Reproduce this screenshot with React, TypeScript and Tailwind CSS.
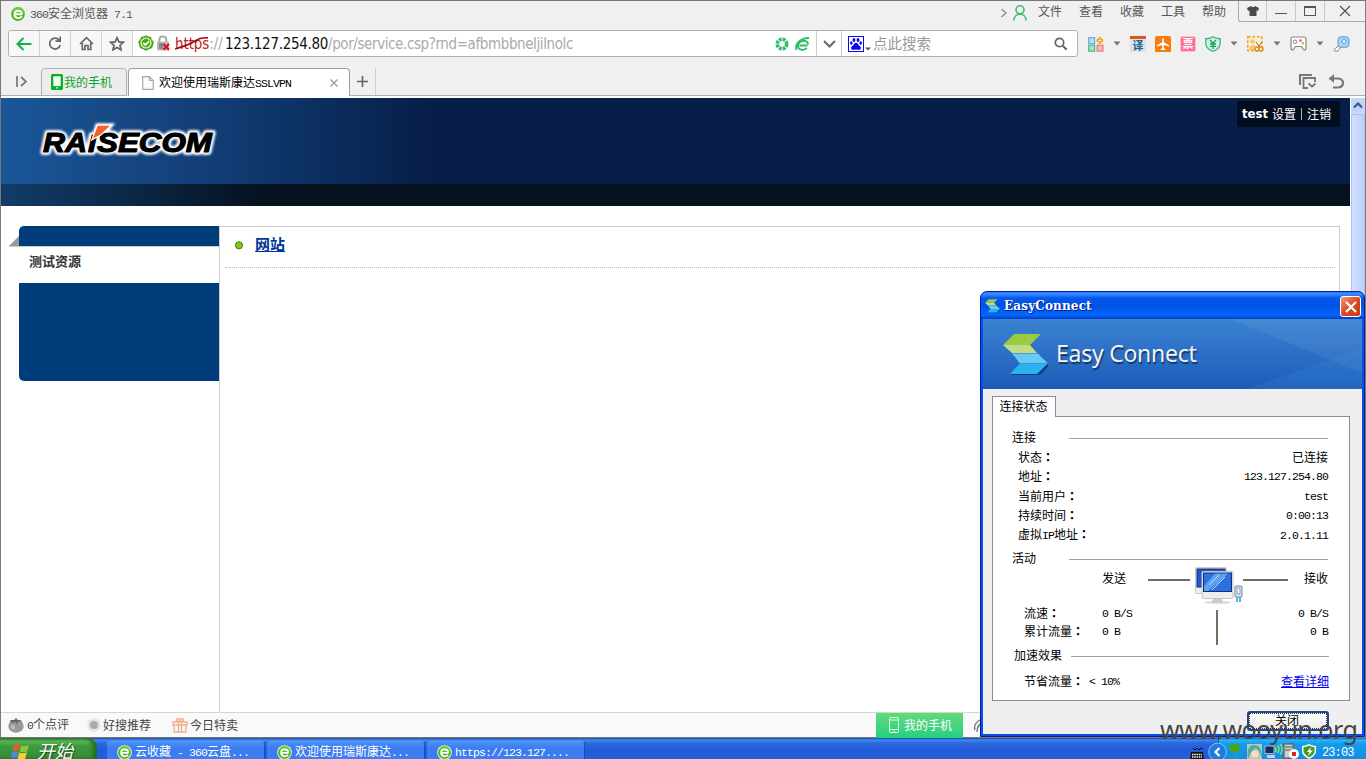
import React from "react";

function Sim({ t, className = "" }: { t: string; className?: string }) {
  return (
    <span className={"whitespace-pre " + className}>
      {t.split(/([\x20-\x7e]+|：)/).map((p, i) =>
        p === "：" ? (
          <span key={i} className="font-['Noto_Sans_CJK_JP',sans-serif] font-bold">{p}</span>
        ) : i % 2 ? (
          <span key={i} className="font-['Liberation_Mono',monospace] text-[11.5px] tracking-[-0.9px]">
            {p}
          </span>
        ) : (
          <span key={i}>{p}</span>
        )
      )}
    </span>
  );
}

function EIcon({ size = 16 }: { size?: number }) {
  return (
    <svg width={size} height={size} viewBox="0 0 16 16" className="shrink-0">
      <circle cx="8" cy="8" r="7.8" fill="#f4faf0" />
      <circle cx="8" cy="8" r="6.9" fill="#4cb81f" />
      <path d="M2 5Q5 0 11 1.6Q14 3 15 6L8 7Z" fill="#8be04c" opacity=".5" />
      <path d="M12.2 8.3H5.2M12 8.2C12 3.6 4.5 3.6 4.4 8.3C4.4 12.8 10.2 13 11.8 10.3" fill="none" stroke="#fff" strokeWidth="1.9" />
    </svg>
  );
}

function Caret() {
  return (
    <svg width="8" height="5" viewBox="0 0 8 5" className="shrink-0">
      <path d="M0.5 0.5H7.5L4 4.5Z" fill="#777" />
    </svg>
  );
}

function TitleBar() {
  const menus = ["文件", "查看", "收藏", "工具", "帮助"];
  return (
    <div className="flex h-[29px] shrink-0 items-start border-t border-[#787679]">
      <div className="flex items-start gap-[4px] pt-[5px] pl-[9px] text-[12px] leading-[16px] text-[#555]">
        <EIcon />
        <Sim t="360安全浏览器 7.1" className="-mt-px" />
      </div>
      <div className="flex-1" />
      <svg width="28" height="16" viewBox="0 0 28 16" className="mt-[4px] mr-[10px]" fill="none">
        <path d="M1.5 4L6 8L1.5 12" stroke="#888" strokeWidth="1.3" />
        <circle cx="20" cy="4.8" r="4" stroke="#3dbb6a" strokeWidth="1.6" />
        <path d="M14 15.5C14 7.2 26 7.2 26 15.5" stroke="#3dbb6a" strokeWidth="1.6" />
      </svg>
      <div className="flex w-[200px] gap-[17px] pt-[1px] text-[12px] leading-[18px] text-[#555]">
        {menus.map((m) => (
          <span key={m} className="w-[24px] shrink-0">{m}</span>
        ))}
      </div>
      <div className="flex h-[21px] w-[127px] rounded-bl-[3px] border-b border-l border-[#aaa]">
        <div className="flex w-[28px] items-center justify-center border-r border-[#c8c8c8]">
          <svg width="12" height="10" viewBox="0 0 12 10"><path d="M0 2L4 0L5 1H7L8 0L12 2L11 5L9.5 4.5V10H2.5V4.5L1 5Z" fill="#4b4b4b" /></svg>
        </div>
        <div className="flex w-[29px] items-center justify-center border-r border-[#c8c8c8]">
          <div className="mt-[5px] h-px w-[12px] bg-[#555]" />
        </div>
        <div className="flex w-[29px] items-center justify-center border-r border-[#c8c8c8]">
          <div className="h-[10px] w-[12px] border border-t-2 border-[#555]" />
        </div>
        <div className="flex flex-1 items-center justify-center">
          <svg width="12" height="12" viewBox="0 0 12 12"><path d="M1 1L11 11M11 1L1 11" stroke="#555" strokeWidth="1.3" /></svg>
        </div>
      </div>
    </div>
  );
}

function NavCell({ children }: { children: React.ReactNode }) {
  return <div className="flex h-full w-[31px] shrink-0 items-center justify-center border-r border-[#d2d2d2] bg-[#f8f8f8]">{children}</div>;
}

function AddressRow() {
  return (
    <div className="flex h-[27px] shrink-0 items-center pl-[7px]">
      <div className="flex h-[27px] w-[1070px] shrink-0 items-center overflow-hidden rounded-[3px] border border-[#b0b0b0] bg-white">
        <NavCell>
          <svg width="16" height="14" viewBox="0 0 16 14" fill="none" stroke="#12b04c" strokeWidth="2"><path d="M15.5 7H2M7.5 1L1.5 7L7.5 13" /></svg>
        </NavCell>
        <NavCell>
          <svg width="14" height="15" viewBox="0 0 14 15" fill="none" stroke="#666" strokeWidth="1.7"><path d="M11.5 4.5A5.4 5.4 0 1 0 12.3 9M12.2 .5V5.2H7.5" /></svg>
        </NavCell>
        <NavCell>
          <svg width="15" height="15" viewBox="0 0 15 15" fill="none" stroke="#666" strokeWidth="1.7"><path d="M1 8L7.5 1.6L14 8M3.3 7V13.5H6V9.5H9V13.5H11.7V7" /></svg>
        </NavCell>
        <NavCell>
          <svg width="16" height="16" viewBox="0 0 16 16" fill="none" stroke="#666" strokeWidth="1.7"><path d="M8 1.7L9.9 5.9L14.4 6.3L11 9.3L12 13.8L8 11.4L4 13.8L5 9.3L1.6 6.3L6.1 5.9Z" /></svg>
        </NavCell>
        <svg width="34" height="17" viewBox="0 0 34 17" className="ml-[5px] shrink-0" fill="none">
          <path d="M8 .3L10.3 1.6L13 2L13.8 4.7L15.8 6.7L15.4 9.3L14 13L11 14.2L8 15.8L5 14.2L2 13L1 9.3L.2 6.7L2 4.7L3 2L5.7 1.6Z" fill="#4aa818" />
          <circle cx="8" cy="8" r="4.9" stroke="#d7f3a9" strokeWidth="1.4" />
          <path d="M5.3 8L7.3 10L11 6.3" stroke="#fff" strokeWidth="1.8" />
          <path d="M21.3 8V4.8C21.3 .3 28.3 .3 28.3 4.8V8" stroke="#aaa" strokeWidth="2" />
          <rect x="19" y="6.5" width="12" height="9" rx="1" fill="#b9b9b9" />
          <rect x="21" y="8" width="4" height="6" fill="#888" />
          <path d="M25.5 9L31 14.8M31 9L25.5 14.8" stroke="#e0101c" strokeWidth="2.2" />
        </svg>
        <div className="flex pt-px font-['DejaVu_Sans_Condensed','DejaVu_Sans',sans-serif] text-[15px] leading-[24px] font-stretch-condensed whitespace-pre">
          <span className="flex w-[53px] pl-[3px] tracking-[-0.1px]">
            <span className="relative text-[#c02020]">
              https
              <svg width="34" height="16" viewBox="0 0 34 16" className="absolute top-[4px] left-0"><path d="M0 13Q14 9 20 5T33 2" stroke="#a00808" strokeWidth="1.6" fill="none" /></svg>
            </span>
            <span className="text-[#aaa]">://</span>
          </span>
          <span className="w-[103px] tracking-[-0.3px] text-[#111]">123.127.254.80</span>
          <span className="tracking-[-0.4px] text-[#aaa]">/por/service.csp?rnd=afbmbbneljilnolc</span>
        </div>
        <div className="flex-1" />
        <svg width="35" height="14" viewBox="0 0 35 14" className="mr-[6px] shrink-0" fill="none">
          <circle cx="7" cy="7" r="4.7" stroke="#2dbf68" strokeWidth="3.6" strokeDasharray="2.8 0.9" />
          <path d="M32.5 8.5H24.5M33 7.5C33 2 23.8 2.7 23 8.5C22.8 13.6 29.5 14 31.8 10.8M21.5 13C19.5 6 27 .8 34 1" stroke="#2dbf68" strokeWidth="1.9" />
        </svg>
        <div className="flex h-full w-[26px] shrink-0 items-center justify-center border-x border-[#ccc]">
          <svg width="13" height="8" viewBox="0 0 13 8"><path d="M1 1L6.5 6.5L12 1" stroke="#666" strokeWidth="2" fill="none" /></svg>
        </div>
        <div className="flex h-full w-[235px] shrink-0 items-center pl-[6px]">
          <svg width="16" height="16" viewBox="0 0 16 16" fill="#0808ee" className="shrink-0">
            <rect x=".5" y=".5" width="15" height="15" fill="#fff" stroke="#0808ee" />
            <ellipse cx="6" cy="4" rx="1.4" ry="1.9" /><ellipse cx="10" cy="4" rx="1.4" ry="1.9" />
            <ellipse cx="3.3" cy="7" rx="1.3" ry="1.7" /><ellipse cx="12.7" cy="7" rx="1.3" ry="1.7" />
            <path d="M8 6.7C10 6.7 10 9 12 10.3C14 12 12.5 14.5 10 13.7Q8 13.2 6 13.7C3.5 14.5 2 12 4 10.3C6 9 6 6.7 8 6.7Z" />
          </svg>
          <svg width="6" height="4" viewBox="0 0 6 4" className="mt-[10px] ml-[1px]"><path d="M0 .5H6L3 3.5Z" fill="#555" /></svg>
          <span className="ml-[2px] pb-px text-[14.5px] leading-[24px] text-[#999]">点此搜索</span>
          <div className="flex-1" />
          <svg width="14" height="14" viewBox="0 0 14 14" className="mr-[9px]" fill="none" stroke="#666"><circle cx="5.5" cy="5.5" r="4.2" strokeWidth="1.7" /><path d="M8.7 8.7L12.7 12.7" strokeWidth="2" /></svg>
        </div>
      </div>
      <div className="flex flex-1 items-center pl-[10px]">
        <svg width="16" height="16" viewBox="0 0 16 16" className="mr-[9px]">
          <rect x=".7" y="1.7" width="6" height="6" fill="#b9defa" stroke="#5a9fd4" /><path d="M11.8 1.2V7.8M8.5 4.5H15.1" stroke="#e7a222" strokeWidth="3" /><path d="M11.8 2.5V6.5M9.8 4.5H13.8" stroke="#ffe070" />
          <rect x=".7" y="9.2" width="6" height="6" fill="#9be8c0" stroke="#3fae78" /><rect x="9" y="9.2" width="6" height="6" fill="#ffb5ae" stroke="#de7770" />
        </svg>
        <Caret />
        <div className="ml-[9px] h-[16px] w-[16px] border-t-[3px] border-[#e4541d] bg-[#e2e2e2] text-center text-[11px] leading-[12px] font-bold text-[#16699d]">译</div>
        <svg width="16" height="16" viewBox="0 0 16 16" className="ml-[9px]"><rect width="16" height="16" rx="1.5" fill="#f77c0a" /><path d="M7.2 3Q8 1 8.8 3V6.2L14 9.2V10.5L8.8 9V12L10.5 13.3V14H5.5V13.3L7.2 12V9L2 10.5V9.2L7.2 6.2Z" fill="#fff" /></svg>
        <div className="ml-[9px] h-[16px] w-[16px] rounded-[2px] border border-[#f8c4d2] bg-[#fb7093] text-center text-[11px] leading-[13px] font-bold text-white">票</div>
        <svg width="16" height="16" viewBox="0 0 16 16" className="ml-[9px]" fill="none"><path d="M8 .8Q11 3 15.2 2.7V8Q14.5 13 8 15.4Q1.5 13 .8 8V2.7Q5 3 8 .8Z" fill="#ccf3df" stroke="#43b584" strokeWidth="1.3" /><path d="M5 3.8L8 7.5L11 3.8M8 7.5V13M5 8H11M5 10.4H11" stroke="#1e9f62" strokeWidth="1.3" /></svg>
        <span className="ml-[9px]"><Caret /></span>
        <svg width="17" height="16" viewBox="0 0 17 16" className="ml-[9px]" fill="none"><rect x=".8" y=".8" width="14" height="14" fill="#fff0d2" stroke="#f0a32d" strokeWidth="1.5" strokeDasharray="3 1.5" /><circle cx="5.5" cy="5.5" r="2.3" fill="#f5c681" /><path d="M2 13Q3 8 8 9V14H2Z" fill="#f5c681" /><path d="M9 6L13.5 12M15 6L10.5 12" stroke="#8b7446" /><circle cx="10" cy="13" r="2" stroke="#e8921a" strokeWidth="1.5" /><circle cx="14" cy="13" r="2" stroke="#e8921a" strokeWidth="1.5" /></svg>
        <span className="ml-[9px]"><Caret /></span>
        <svg width="17" height="15" viewBox="0 0 17 15" className="ml-[9px]" fill="none"><path d="M2.5 1H14.5Q16 1 16 3V12Q16 14 14 14L11.5 10.5H5.5L3 14Q1 14 1 12V3Q1 1 2.5 1Z" fill="#fff" stroke="#888" strokeWidth="1.2" /><circle cx="5" cy="5.8" r="1.8" stroke="#888" /><circle cx="10.5" cy="4.5" r="1.2" fill="#e84f3d" /><circle cx="12.8" cy="7.3" r="1.2" fill="#f2a02a" /></svg>
        <span className="ml-[9px]"><Caret /></span>
        <svg width="17" height="16" viewBox="0 0 17 16" className="ml-[9px]" fill="none"><path d="M6.5 9L1 13.5L2 15.2L5 15L7.8 11" fill="#fff" stroke="#888" /><rect x="5" y=".8" width="11" height="10.5" rx="3" fill="#a5d4f7" stroke="#5b9fd0" /><circle cx="11" cy="5.500" r="2" fill="#e8f6ff" stroke="#5b9fd0" /></svg>
      </div>
    </div>
  );
}

function TabRow() {
  return (
    <div className="flex h-[41px] shrink-0 items-end border-b-2 border-white">
      <div className="flex h-[28px] w-[40px] items-center border-b border-[#b0b0b0] pl-[15px]">
        <svg width="12" height="11" viewBox="0 0 12 11" fill="none" stroke="#777" strokeWidth="1.7"><path d="M1 0V11M5 1L10 5.500L5 10" /></svg>
      </div>
      <div className="flex h-[28px] w-[86px] items-center rounded-t-[4px] border border-[#b0b0b0] bg-[#ededed] pl-[9px]">
        <svg width="12" height="16" viewBox="0 0 12 16"><rect width="12" height="16" rx="1.5" fill="#08ae2c" /><rect x="2.3" y="2.3" width="7.4" height="9.8" fill="#f3fff3" /><rect x="5" y="13.4" width="2.2" height="1" fill="#fff" /></svg>
        <span className="ml-[1px] text-[12px] leading-[16px] text-[#08a52c]">我的手机</span>
      </div>
      <div className="ml-[1px] flex h-[28px] w-[222px] items-center rounded-t-[4px] border border-b-0 border-[#a0a0a0] bg-white pl-[13px]">
        <svg width="12" height="14" viewBox="0 0 12 14"><path d="M.7 .7H7.5L11.3 4.5V13.3H.7ZM7.5 .7V4.5H11.3" fill="#fafafa" stroke="#aaa" strokeWidth="1.2" /></svg>
        <Sim t="欢迎使用瑞斯康达SSLVPN" className="ml-[5px] text-[12px] leading-[16px] text-black" />
        <div className="flex-1" />
        <svg width="8" height="8" viewBox="0 0 8 8" className="mr-[11px]"><path d="M.5 .5L7.5 7.5M7.5 .5L.5 7.5" stroke="#999" strokeWidth="1.2" /></svg>
      </div>
      <div className="flex h-[28px] flex-1 items-center border-b border-[#b0b0b0]">
        <div className="flex h-full w-[26px] items-center justify-center border-r border-[#cfcfcf]">
          <svg width="11" height="11" viewBox="0 0 11 11"><path d="M5.5 0V11M0 5.5H11" stroke="#666" strokeWidth="1.7" /></svg>
        </div>
        <div className="flex-1" />
        <svg width="46" height="16" viewBox="0 0 46 16" className="mr-[20px]" fill="none" stroke="#777">
          <path d="M1 11V1H13" strokeWidth="2" /><path d="M9 14H4.5V4H16V8" strokeWidth="1.8" /><path d="M9.5 9.5L13 12.5L16.5 9.5" strokeWidth="1.8" />
          <path d="M30 4.5H39Q44 5 44 9T39 13.5H34" strokeWidth="2.2" /><path d="M30 4.5L35 0V9Z" fill="#777" stroke="none" />
        </svg>
      </div>
    </div>
  );
}

function LogoWord({ halo }: { halo?: boolean }) {
  return (
    <g
      fontFamily="Liberation Sans"
      fontWeight="bold"
      fontStyle="italic"
      fontSize="28.5"
      fill={halo ? "#fff" : "#000"}
      stroke={halo ? "#fff" : "#000"}
      strokeWidth={halo ? 6 : 1.2}
      strokeLinejoin="round"
    >
      <text x="9" y="36" textLength="44" lengthAdjust="spacingAndGlyphs">RA</text>
      <text x="54" y="36" fontSize="24" textLength="8" lengthAdjust="spacingAndGlyphs">I</text>
      <text x="63" y="36" textLength="115" lengthAdjust="spacingAndGlyphs">SECOM</text>
    </g>
  );
}

function Portal() {
  return (
    <div className="flex w-[1349px] shrink-0 flex-col">
      <div className="flex h-[86px] bg-[linear-gradient(90deg,#1a5799_0px,#174a87_100px,#113b72_230px,#0a2a59_350px,#071e48_430px)]">
        <svg width="190" height="54" viewBox="0 0 190 54" className="mt-[18px] ml-[33px]">
          <defs><filter id="glow" x="-10%" y="-30%" width="120%" height="160%"><feGaussianBlur stdDeviation="1.3" /></filter></defs>
          <g filter="url(#glow)">
            <LogoWord halo />
            <path d="M59 23L63.7 9.700H76L66 22Z" fill="#fff" stroke="#fff" strokeWidth="5" />
          </g>
          <LogoWord />
          <path d="M59 22.500L63.700 9.700H76L66.500 18.500Z" fill="#f4622a" stroke="#fff" strokeWidth="2.500" paintOrder="stroke" />
        </svg>
        <div className="flex-1" />
        <div className="mt-[3px] mr-[10px] flex h-[26px] w-[103px] items-center bg-[#030d20] pb-px pl-[5px] text-[12px] text-white">
          <span className="w-[30px] font-['DejaVu_Sans_Condensed','DejaVu_Sans',sans-serif] text-[13px] font-bold font-stretch-condensed">test</span>
          <span>设置</span>
          <span className="mx-[5px] h-[12px] w-px bg-[#b4b88c]" />
          <span>注销</span>
        </div>
      </div>
      <div className="h-[22px] bg-[linear-gradient(90deg,#123c69_0px,#0c2b4c_110px,#081d34_190px,#06121f_260px)]" />
      <div className="mt-[20px] flex flex-1 pl-[8px]">
        <div className="flex w-[210px] flex-col">
          <div className="flex h-[21px] items-end border-b border-[#ccc]">
            <svg width="10" height="10" viewBox="0 0 10 10"><path d="M10 0V10H0Z" fill="#999" /></svg>
            <div className="h-full flex-1 rounded-tl-[5px] bg-[#003d7b]" />
          </div>
          <div className="h-[36px] pl-[20px] text-[13px] leading-[28px] font-bold text-[#333]">测试资源</div>
          <div className="ml-[10px] h-[98px] rounded-bl-[5px] bg-[#003d7b]" />
        </div>
        <div className="w-[1121px] border border-b-0 border-[#ccc] pr-[4px] pl-[5px]">
          <div className="flex h-[41px] items-center border-b border-dotted border-[#bbb] pb-[4px] pl-[10px]">
            <svg width="8" height="9" viewBox="0 0 8 9"><circle cx="4" cy="4.300" r="3.600" fill="#80c80c" stroke="#4b7c11" /></svg>
            <a className="ml-[12px] pb-[3px] text-[15px] leading-[17px] font-bold text-[#003399] underline">网站</a>
          </div>
        </div>
      </div>
    </div>
  );
}

function ScrollBar() {
  return (
    <div className="ml-[1px] flex w-[14px] flex-col bg-[#c9d8fa]">
      <div className="flex h-[14px] items-center justify-center rounded-[2px] bg-[#c2d3fc]">
        <svg width="10" height="7" viewBox="0 0 10 7"><path d="M1 5.500L5 1.500L9 5.500" stroke="#3d5585" strokeWidth="2.200" fill="none" /></svg>
      </div>
      <div className="mt-[2px] flex-1 border border-[#a9c0f3] bg-[linear-gradient(90deg,#d3dffe,#bccffb)]" />
    </div>
  );
}

function StatusBar() {
  return (
    <div className="flex h-[26px] shrink-0 items-center border-t border-b border-t-[#d6d6d6] border-b-[#777] bg-[#f9f9f9] pl-[7px] text-[12px] text-[#444]">
      <svg width="16" height="16" viewBox="0 0 16 16"><ellipse cx="8" cy="9" rx="7.700" ry="6.800" fill="#999" /><path d="M2 3L7 3L8 0L9 3L14 3L10 5L9 7L7 5L4 6Z" fill="#666" /><ellipse cx="5" cy="10" rx="2" ry="2.500" fill="#bbb" /></svg>
      <Sim t="0个点评" className="ml-[3px] w-[60px]" />
      <svg width="14" height="14" viewBox="0 0 14 14"><circle cx="7" cy="7" r="6.800" fill="#e4e4e4" /><circle cx="7" cy="7" r="4" fill="#aaa" /></svg>
      <span className="ml-[2px] w-[69px]">好搜推荐</span>
      <svg width="16" height="15" viewBox="0 0 16 15" fill="none" stroke="#f2ad8c" strokeWidth="1.3"><path d="M1 4H15V7H1ZM2 7V14H14V7M6.500 4V14M9.500 4V14M8 4Q3 3 5 1T8 4Q13 3 11 1T8 4" /></svg>
      <span className="ml-[2px]">今日特卖</span>
      <div className="flex-1" />
      <div className="mr-[10px] flex h-[25px] w-[87px] items-center bg-[linear-gradient(#62da78,#26cf83)] pl-[13px] text-white">
        <svg width="10" height="16" viewBox="0 0 10 16" fill="none" stroke="#e4ffe9"><rect x=".5" y=".5" width="9" height="15" rx="1" /><path d="M.5 3H9.500M.5 12.500H9.500M4 14H6" /></svg>
        <span className="ml-[5px] leading-[16px]">我的手机</span>
      </div>
      <svg width="16" height="16" viewBox="0 0 16 16" className="mr-[376px]" fill="none" stroke="#777" strokeWidth="1.4"><path d="M2 13Q0 7 7 3M4 15Q4 8 10 5" /></svg>
    </div>
  );
}

function Task({ label }: { label: string }) {
  return (
    <div className="mr-[2px] flex h-[18px] w-[158px] shrink-0 items-center rounded-t-[3px] border-t border-r border-t-[#5a9bfb] border-r-[#1b4cb4] bg-[linear-gradient(#4a8ef8,#3a7bef_40%,#3b7ff2)] pt-[3px] pl-[10px] text-[12px] text-white">
      <EIcon size={15} />
      <Sim t={label} className="ml-[3px]" />
    </div>
  );
}

function TaskBar() {
  return (
    <div className="flex h-[21px] shrink-0 bg-[linear-gradient(#1a48a8_0px,#418bf0_2px,#2a68dd_5px,#2359d6_12px,#245edb)]">
      <div className="flex h-[21px] w-[97px] items-start rounded-tr-[9px] bg-[linear-gradient(#2c7a2c,#5fb85a_3px,#3c993c_8px,#358f35)] pl-[11px] shadow-[inset_-4px_0_4px_#246b24]">
        <svg width="19" height="17" viewBox="0 1 19 17" className="mt-[4px]"><path d="M3 4Q6 2 9 4L7.500 10Q5 8.500 1.500 10Z" fill="#ee5a25" /><path d="M10.300 4.500Q14 6 18 4L16 10.500Q12 12 8.500 10.500Z" fill="#8cc63e" /><path d="M1.200 11Q4 9.500 7.300 11L5.500 17Q3 16 0 17Z" fill="#4c86e8" /><path d="M8.300 11.500Q12 13 16 11.300L14 18Q11 19 6.500 17.500Z" fill="#f9cf35" /></svg>
        <span className="ml-[7px] text-[18px] leading-[24px] text-white italic [text-shadow:1px_1px_1px_#174a17]">开始</span>
      </div>
      <div className="flex flex-1 items-end pl-[10px]">
        <Task label="云收藏 - 360云盘..." />
        <Task label="欢迎使用瑞斯康达..." />
        <Task label="https://123.127...." />
      </div>
      <svg width="14" height="13" viewBox="0 0 14 13" className="mt-[9px] mr-[14px] shrink-0"><path d="M3 1L5 3L7 1L9 3L11 1L13 2" stroke="#111" fill="none" /><path d="M1 5H13L14 13H0Z" fill="#111" /><path d="M2 7.500H12M2 10H12" stroke="#fff" strokeWidth="1.300" strokeDasharray="1.500 .8" /></svg>
      <div className="flex w-[148px] items-start border-l border-[#0c4fa0] bg-[linear-gradient(#0f6fd2_0px,#27b4f6_2px,#169be9_6px,#118ee4)]">
        <svg width="108" height="21" viewBox="0 1 108 21" className="-ml-[11px] shrink-0">
          <circle cx="9.500" cy="15" r="8.800" fill="#1c7ddd" stroke="#9dd4fb" strokeWidth=".8" /><path d="M11.500 11L7.500 15L11.500 19" stroke="#fff" strokeWidth="2.300" fill="none" />
          <path d="M20 11L24 7H33L29.500 11L32.500 15H24Z" fill="#4ca516" /><path d="M24 15H34L30 22H22L26 18Z" fill="#149bd4" />
          <rect x="39" y="7" width="15" height="15" fill="#b8ccb2" /><path d="M40 22Q38 8 46 8T54 21L51 14L48 11L43 15Z" fill="#50aaa5" /><ellipse cx="47" cy="17" rx="3.500" ry="3.500" fill="#f6dfc7" />
          <rect x="57" y="9" width="9" height="7.500" fill="#15295d" stroke="#a3b6d8" /><rect x="59" y="18" width="8" height="3" fill="#c5cede" /><path d="M67 10Q69 13 67 15M69.500 8.500Q72.500 12 69.500 16M72 7Q76.500 12 72 17.500" stroke="#9cec44" strokeWidth="1.300" fill="none" />
          <rect x="76" y="7" width="9" height="14" fill="#cfcfcf" stroke="#555" /><path d="M77 10H84M77 13H84" stroke="#555" /><circle cx="86" cy="17" r="5" fill="#fff" /><rect x="84" y="15" width="4" height="4" fill="#ee2010" />
          <path d="M101 7Q105 9 108 9V15Q107 19 101 22Q95 19 94 15V9Q97 9 101 7Z" fill="#fff" /><path d="M101 8.500Q104 10 106.500 10V15Q105.500 18 101 20.500Q97 18 95.500 15V10Q98 10 101 8.500Z" fill="#449c1a" /><path d="M103 10L99 15H101.500L100 19L105 13.500H102Z" fill="#fff" />
        </svg>
        <span className="mt-[8px] ml-[6px] font-['Liberation_Mono',monospace] text-[12px] leading-[14px] tracking-[-0.9px] text-white">23:03</span>
      </div>
    </div>
  );
}

function Row({ l, r, h }: { l: string; r: string; h: string }) {
  return (
    <div className={"flex items-center justify-between pb-[2px] pl-[6px] " + h}>
      <Sim t={l} />
      <Sim t={r} />
    </div>
  );
}

function Logo({ w, h }: { w: number; h: number }) {
  return (
    <svg width={w} height={h} viewBox="0 0 45 41" className="shrink-0">
      <path d="M9 20L17 29L7 40H36L45 30.500L36 20Z" fill="#0c3c80" transform="translate(1 1)" />
      <path d="M11 0H38L27 11H0Z" fill="#9bca43" /><path d="M0 11H27L34 19H9Z" fill="#c0dc85" /><path d="M9 19.500H35L45 29.500H17Z" fill="#67c9f4" /><path d="M17 29.500H45L34 40H7Z" fill="#2bb3ee" />
    </svg>
  );
}

function Section({ label, gap }: { label: string; gap: string }) {
  return (
    <div className="flex h-[20px] items-center">
      <span className={"shrink-0 pb-[2px] " + gap}>{label}</span>
      <div className="h-px flex-1 bg-[#a5a498]" />
    </div>
  );
}

function Dialog() {
  return (
    <div className="absolute top-[291px] left-[980px] flex h-[446px] w-[385px] flex-col rounded-t-[7px] border border-[#001ea0] bg-[#0a4fe8] text-[12px] leading-[16px] text-black">
      <div className="flex h-[27px] shrink-0 items-center rounded-t-[6px] bg-[linear-gradient(#2b78f5_0px,#3d8cff_2px,#0458ee_6px,#0053e2_14px,#0567ff_23px,#003fc0)] pr-[3px] pl-[4px]">
        <Logo w={15} h={14} />
        <span className="ml-[4px] font-['DejaVu_Serif',serif] text-[12px] font-bold tracking-[0.15px] text-white [text-shadow:1px_1px_0_#0a1883]">EasyConnect</span>
        <div className="flex-1" />
        <div className="mt-[2px] flex h-[21px] w-[21px] items-center justify-center rounded-[3px] border border-white bg-[linear-gradient(135deg,#f19a80,#dc4a25_50%,#c93a12)]">
          <svg width="12" height="12" viewBox="0 0 12 12"><path d="M1 1L11 11M11 1L1 11" stroke="#fff" strokeWidth="2.200" /></svg>
        </div>
      </div>
      <div className="mx-[2px] mb-[2px] flex min-h-0 flex-1 flex-col bg-[#efefef]">
        <div className="relative flex h-[70px] shrink-0 items-center bg-[linear-gradient(#3b82d2,#1b5cb9)] pl-[20px]">
          <svg width="379" height="70" viewBox="0 0 379 70" className="absolute top-0 left-0">
            <path d="M247 0H379V54Z" fill="#fff" opacity=".06" />
            <path d="M379 29V70H264Z" fill="#4fa0f0" opacity=".14" />
          </svg>
          <Logo w={45} h={41} />
          <span className="ml-[8px] pb-[3px] font-['Noto_Sans',sans-serif] text-[23px] leading-[30px] tracking-[-0.25px] text-[#f3f3f3] [text-shadow:1px_2px_1px_#123568]">Easy Connect</span>
        </div>
        <div className="flex flex-1 flex-col px-[9px] pt-[7px]">
          <div className="z-10 -mb-px flex h-[21px] w-[64px] items-center justify-center border border-b-0 border-[#8c8c99] bg-white pr-px pb-[2px]">连接状态</div>
          <div className="flex h-[285px] w-[358px] flex-col border border-[#8c8c99] bg-white pt-[11px] pr-[21px] pl-[19px]">
            <Section label="连接" gap="w-[57px]" />
            <Row l="状态：" r="已连接" h="h-[19px]" />
            <Row l="地址：" r="123.127.254.80" h="h-[20px]" />
            <Row l="当前用户：" r="test" h="h-[19px]" />
            <Row l="持续时间：" r="0:00:13" h="h-[20px]" />
            <Row l="虚拟IP地址：" r="2.0.1.11" h="h-[19px]" />
            <div className="h-[4px]" />
            <Section label="活动" gap="w-[57px]" />
            <div className="flex h-[35px] items-start pl-[90px]">
              <span className="mt-px w-[46px]">发送</span>
              <div className="mt-[10px] h-[2px] w-[42px] bg-[#736e60]" />
              <svg width="53" height="38" viewBox="0 0 53 38" className="-mt-[3px]">
                <g transform="translate(5 1)">
                  <rect x=".5" y=".5" width="31" height="26" rx="1" fill="#eee" stroke="#ccc" /><rect x="2" y="2" width="28" height="18" fill="#2258c6" stroke="#122f75" />
                  <rect x="7" y="4.500" width="31" height="27" rx="1" fill="#eee" stroke="#c4c4c4" /><rect x="8.500" y="6" width="28" height="18.500" fill="#2c70dd" stroke="#122f75" />
                  <path d="M9 19L20 6.500H33Q24 16 13 24H9Z" fill="#70b6f5" opacity=".7" /><path d="M17 23L30 10M14 18L24 8" stroke="#b7e0ff" />
                  <path d="M18 32H27L28 35H17Z" fill="#ccc" /><ellipse cx="22.500" cy="35.500" rx="13" ry="1.300" fill="#bbb" opacity=".6" />
                </g>
                <rect x="45" y="20" width="7" height="11" rx="1" fill="#e4eef5" stroke="#6982ad" /><rect x="47" y="22" width="3" height="6" fill="#fff" stroke="#6982ad" strokeWidth=".8" /><path d="M47 31V36M50 31V36" stroke="#26a7d6" strokeWidth="1.600" />
              </svg>
              <div className="mt-[10px] h-[2px] w-[45px] bg-[#736e60]" />
              <span className="mt-px ml-auto">接收</span>
            </div>
            <div className="flex h-[37px]">
              <div className="flex w-[77px] flex-col pl-[12px]">
                <Sim t="流速：" className="h-[18px] leading-[18px]" />
                <Sim t="累计流量：" className="h-[18px] leading-[18px]" />
              </div>
              <div className="-mt-px ml-[13px] flex w-[114px] flex-col">
                <Sim t="0 B/S" className="h-[18px] leading-[18px]" />
                <Sim t="0 B" className="h-[18px] leading-[18px]" />
              </div>
              <div className="mt-[6px] h-[35px] w-[2px] shrink-0 self-start bg-[#736e60]" />
              <div className="-mt-px flex flex-1 flex-col items-end">
                <Sim t="0 B/S" className="h-[18px] leading-[18px]" />
                <Sim t="0 B" className="h-[18px] leading-[18px]" />
              </div>
            </div>
            <div className="mt-[5px] -mr-px pl-[2px]">
              <Section label="加速效果" gap="w-[57px]" />
            </div>
            <div className="mt-[6px] -mr-px flex h-[18px] items-center pl-[12px]">
              <Sim t="节省流量：" className="w-[65px]" />
              <Sim t="< 10%" />
              <a className="ml-auto text-[#0000ee] underline">查看详细</a>
            </div>
          </div>
          <div className="mt-[10px] mr-[24px] flex h-[20px] w-[82px] items-center justify-center self-end rounded-[3px] border-2 border-[#1c4d8d] bg-[linear-gradient(#fff,#ecebe5)]">
            <div className="flex h-full w-full items-center justify-center border border-dotted border-[#333] pr-[2px] pb-[2px]">关闭</div>
          </div>
        </div>
      </div>
    </div>
  );
}

export default function App() {
  return (
    <div className="relative flex h-[759px] w-[1366px] flex-col overflow-hidden bg-[#f0f0f0] font-['Noto_Sans_CJK_SC',sans-serif]">
      <div className="flex h-[738px] shrink-0 flex-col border-r border-l border-[#7a7a7a]">
        <TitleBar />
        <div className="h-px shrink-0" />
        <AddressRow />
        <TabRow />
        <div className="flex h-[614px] shrink-0 bg-white">
          <Portal />
          <ScrollBar />
        </div>
        <StatusBar />
      </div>
      <TaskBar />
      <Dialog />
      <div className="absolute top-[709px] left-[1160px] font-['Noto_Sans',sans-serif] text-[25px] leading-[40px] tracking-[-0.55px] whitespace-nowrap text-[#454545]">www.wooyun.org</div>
    </div>
  );
}
